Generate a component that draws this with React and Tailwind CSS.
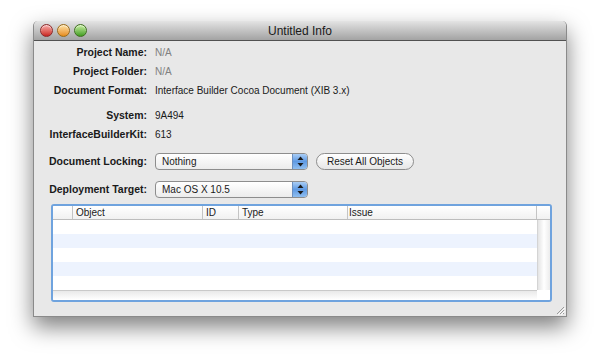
import React from 'react';

const font = { fontFamily: '"Liberation Sans", Arial, sans-serif' };

const Light = ({ from, to, ring }) => (
  <span
    className={`block w-[13px] h-[13px] rounded-full border ${ring} bg-gradient-to-b ${from} ${to} shadow-[inset_0_1px_1px_rgba(255,255,255,0.6)]`}
  />
);

const Row = ({ label, value, muted }) => (
  <div className="flex items-center h-[19px]">
    <div className="w-[113px] text-right font-bold text-[10.5px] text-[#1a1a1a]">{label}</div>
    <div className={`ml-2 ${muted ? 'text-[#808080]' : 'text-[#1a1a1a]'}`}>{value}</div>
  </div>
);

const Arrows = () => (
  <svg width="7" height="11" viewBox="0 0 7 11">
    <path d="M3.5 0.5 L6.5 4 L0.5 4 Z" fill="#1a1a1a" />
    <path d="M3.5 10.5 L6.5 7 L0.5 7 Z" fill="#1a1a1a" />
  </svg>
);

const Popup = ({ value }) => (
  <div className="w-[153px] h-[17px] flex rounded-[4px] border border-[#8d8d8d] bg-gradient-to-b from-white to-[#ececec] overflow-hidden">
    <div className="flex-1 pl-[6px] flex items-center text-[#1a1a1a]">{value}</div>
    <div className="w-[15px] flex items-center justify-center bg-gradient-to-b from-[#a9cdf5] via-[#5f9ae3] to-[#8fbef0] border-l border-[#6b8fbf]">
      <Arrows />
    </div>
  </div>
);

export default function App() {
  return (
    <div className="w-[601px] h-[364px] bg-white pt-[21px] pl-[33px] text-[10px]" style={font}>
      <div className="w-[534px] h-[296px] flex flex-col bg-[#e8e8e8] rounded-t-[5px] border-x border-b border-[#8a8a8a] shadow-[0_10px_22px_rgba(0,0,0,0.5)]">
        {/* title bar */}
        <div className="relative h-[20px] flex items-center rounded-t-[5px] bg-gradient-to-b from-[#e4e4e4] to-[#a3a3a3] border-b border-[#515151]">
          <div className="flex gap-[4px] pl-[6px]">
            <Light from="from-[#f7a8a8]" to="to-[#c81e1e]" ring="border-[#8a2a2a]" />
            <Light from="from-[#fde2a0]" to="to-[#e58c10]" ring="border-[#9a6a1a]" />
            <Light from="from-[#c8f0a0]" to="to-[#3f9d1c]" ring="border-[#3d6e1e]" />
          </div>
          <div className="absolute inset-0 flex items-center justify-center text-[12px] text-[#1a1a1a]">
            Untitled Info
          </div>
        </div>

        {/* info rows */}
        <div className="pt-[2px]">
          <Row label="Project Name:" value="N/A" muted />
          <Row label="Project Folder:" value="N/A" muted />
          <Row label="Document Format:" value="Interface Builder Cocoa Document (XIB 3.x)" />
          <div className="h-[6px]" />
          <Row label="System:" value="9A494" />
          <Row label="InterfaceBuilderKit:" value="613" />
        </div>

        <div className="flex items-center mt-[9px] h-[17px]">
          <div className="w-[113px] text-right font-bold text-[10.5px] text-[#1a1a1a]">Document Locking:</div>
          <div className="ml-2">
            <Popup value="Nothing" />
          </div>
          <div className="ml-[8px] w-[98px] h-[17px] rounded-full border border-[#8d8d8d] bg-gradient-to-b from-white to-[#e6e6e6] flex items-center justify-center text-[#1a1a1a]">
            Reset All Objects
          </div>
        </div>

        <div className="flex items-center mt-[11px] h-[17px]">
          <div className="w-[113px] text-right font-bold text-[10.5px] text-[#1a1a1a]">Deployment Target:</div>
          <div className="ml-2">
            <Popup value="Mac OS X 10.5" />
          </div>
        </div>

        {/* table */}
        <div className="ml-[17px] mt-[6px] w-[501px] h-[98px] rounded-[3px] border-2 border-[#6fa3de] bg-white flex flex-col overflow-hidden">
          <div className="flex h-[14px] border-b border-[#bdbdbd] bg-gradient-to-b from-white to-[#f1f1f1] text-[#1a1a1a]">
            <div className="w-[20px] border-r border-[#c4c4c4]" />
            <div className="w-[130px] pl-[3px] border-r border-[#c4c4c4] leading-[13px]">Object</div>
            <div className="w-[36px] pl-[3px] border-r border-[#c4c4c4] leading-[13px]">ID</div>
            <div className="w-[109px] pl-[3px] border-r border-[#c4c4c4] leading-[13px]">Type</div>
            <div className="w-[189px] pl-[1px] border-r border-[#c4c4c4] leading-[13px]">Issue</div>
            <div className="flex-1" />
          </div>
          <div className="flex flex-1">
            <div className="flex-1 flex flex-col">
              <div className="h-[14px] bg-white" />
              <div className="h-[14px] bg-[#edf3fe]" />
              <div className="h-[14px] bg-white" />
              <div className="h-[14px] bg-[#edf3fe]" />
              <div className="h-[14px] bg-white" />
              <div className="flex-1 border-t border-[#c9c9c9] bg-gradient-to-b from-[#e9e9e9] to-white" />
            </div>
            <div className="w-[13px] flex flex-col">
              <div className="h-[70px] bg-gradient-to-r from-[#e4e4e4] via-white to-[#ececec] border-l border-[#d4d4d4]" />
              <div className="flex-1 bg-white" />
            </div>
          </div>
        </div>

        <div className="flex-1 flex items-end justify-end pr-[1px] pb-[1px]">
          <svg width="10" height="10" viewBox="0 0 10 10">
            <path d="M9 2 L2 9 M9 5 L5 9 M9 8 L8 9" stroke="#9a9a9a" strokeWidth="1" />
            <path d="M10 3 L3 10 M10 6 L6 10" stroke="#ffffff" strokeWidth="0.8" />
          </svg>
        </div>
      </div>
    </div>
  );
}
